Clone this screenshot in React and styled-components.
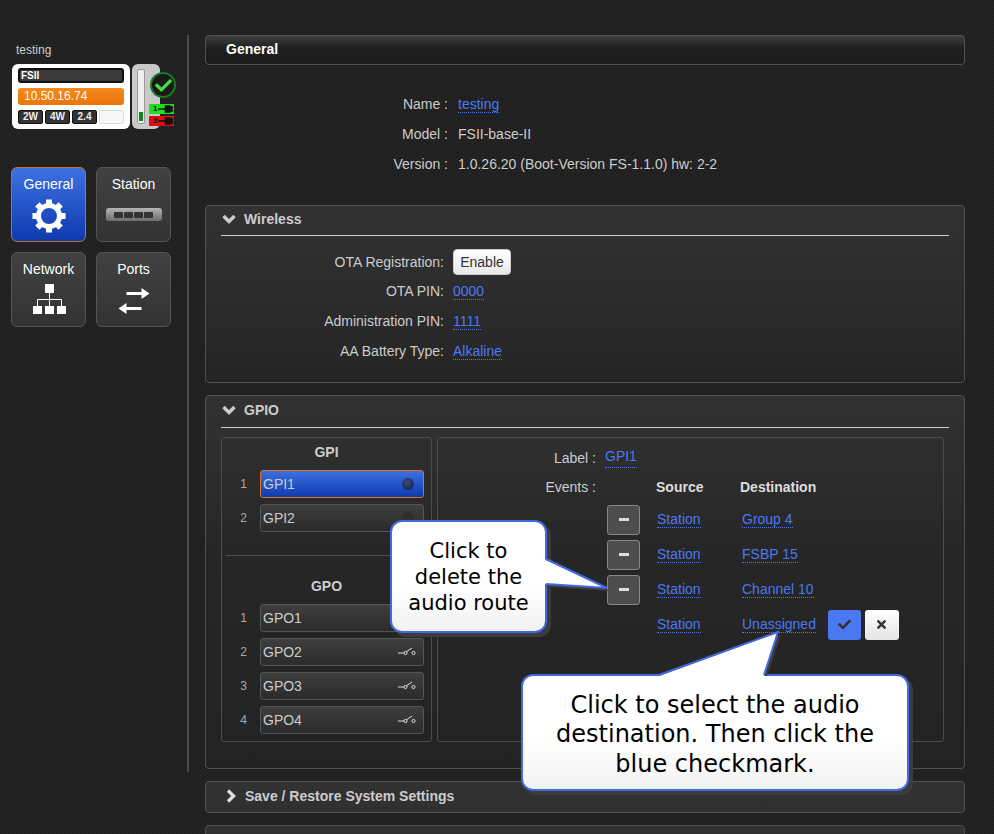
import React from 'react';
import styled, { createGlobalStyle } from 'styled-components';
import { FaCheck, FaTimes } from 'react-icons/fa';

const GlobalStyle = createGlobalStyle`
  html, body {
    margin: 0;
    height: 100%;
    overflow: hidden;
    background-color: #222;
    background-image: repeating-conic-gradient(#242424 0 25%, #1f1f1f 0 50%);
    background-size: 4px 4px;
    font-family: "Liberation Sans", Arial, sans-serif;
    font-size: 14px;
    color: #ccc;
  }
`;

const Page = styled.div`
  position: relative;
  display: flex;
  width: 994px;
  height: 834px;
  padding-top: 35px;
  box-sizing: border-box;
  overflow: hidden;
`;

const Sidebar = styled.div`
  width: 189px;
  height: 737px;
  flex-shrink: 0;
  box-sizing: border-box;
  border-right: 2px solid #4a4a4a;
`;

const DeviceName = styled.div`
  font-size: 12px;
  line-height: 14px;
  margin: 8px 0 7px 16px;
  color: #ccc;
`;

const Device = styled.div`
  position: relative;
  display: flex;
  gap: 2px;
  margin-left: 12px;
  height: 65px;
`;

const DeviceFace = styled.div`
  width: 118px;
  box-sizing: border-box;
  padding: 4px 6px;
  background: #fff;
  border-radius: 6px;
  display: flex;
  flex-direction: column;
  gap: 5px;
`;

const DeviceTitle = styled.div`
  height: 15px;
  box-sizing: border-box;
  border: 2px solid #111;
  border-radius: 3px;
  background: #3a3a3a;
  color: #fff;
  font-size: 10px;
  font-weight: bold;
  line-height: 11px;
  padding-left: 1px;
`;

const DeviceIp = styled.div`
  height: 17px;
  border-radius: 3px;
  background: linear-gradient(#f58a1f, #ec7404);
  color: #fff;
  font-size: 12px;
  line-height: 17px;
  padding-left: 6px;
`;

const DeviceChips = styled.div`
  display: flex;
  gap: 2px;
`;

const Chip = styled.div`
  width: 25px;
  height: 14px;
  box-sizing: border-box;
  border-radius: 2px;
  text-align: center;
  font-size: 10px;
  font-weight: bold;
  line-height: 12px;
  color: #eee;
  background: ${(p) => (p.$empty ? '#f7f7f7' : '#333')};
  border: 1px solid ${(p) => (p.$empty ? '#ddd' : '#111')};
`;

const DeviceSide = styled.div`
  width: 28px;
  box-sizing: border-box;
  padding: 5px 0 0 5px;
  background: #c9c9c9;
  border-radius: 6px;
`;

const LevelBar = styled.div`
  display: flex;
  align-items: flex-end;
  width: 8px;
  height: 55px;
  box-sizing: border-box;
  border: 1px solid #999;
  border-radius: 2px;
  background: #eee;
  padding: 1px 1px 2px;
`;

const LevelFill = styled.div`
  width: 100%;
  height: 9px;
  background: #0a8a1a;
`;

const StatusBadge = styled.div`
  position: absolute;
  left: 138px;
  top: 8px;
  width: 26px;
  height: 26px;
  box-sizing: border-box;
  border-radius: 50%;
  border: 2px solid #1c7a20;
  background: #1a1a1a;
  display: flex;
  align-items: center;
  justify-content: center;
`;

const Plug = styled.div`
  position: absolute;
  left: 137px;
  top: ${(p) => p.$top}px;
  width: 25px;
  height: 10px;
  border-radius: 1px;
  background: ${(p) => p.$color};
  color: #111;
  font-size: 8px;
  font-weight: bold;
  line-height: 10px;
  display: flex;
  align-items: center;
  padding-left: 4px;
  box-sizing: border-box;
`;

const NavGrid = styled.div`
  display: grid;
  grid-template-columns: 75px 75px;
  gap: 10px;
  margin: 38px 0 0 11px;
`;

const NavTile = styled.div`
  height: 75px;
  box-sizing: border-box;
  padding-top: 8px;
  border-radius: 6px;
  border: 1px solid ${(p) => (p.$active ? '#c4702a' : '#555')};
  background: ${(p) => (p.$active ? 'linear-gradient(#3d70e2, #0e3aae)' : 'linear-gradient(#414141, #333)')};
  color: #fff;
  text-align: center;
  line-height: 16px;
  display: flex;
  flex-direction: column;
  align-items: center;
  gap: 7px;
`;

const NavIcon = styled.div`
  height: 34px;
  display: flex;
  align-items: center;
  justify-content: center;
  color: #fff;
`;

const StationBar = styled.div`
  width: 56px;
  height: 13px;
  margin-bottom: 3px;
  border-radius: 3px;
  background: linear-gradient(#b5b5b5, #6c6c6c);
  display: flex;
  justify-content: center;
  align-items: center;
  gap: 1px;
`;

const StationSlot = styled.div`
  width: 9px;
  height: 6px;
  border-radius: 1px;
  background: #333;
`;

const Main = styled.div`
  width: 760px;
  margin-left: 16px;
  flex-shrink: 0;
`;

const TopBar = styled.div`
  height: 30px;
  box-sizing: border-box;
  border: 1px solid #505050;
  border-radius: 4px;
  background: linear-gradient(#3e3e3e, #1e1e1e 45%, #1d1d1d);
  padding-left: 20px;
  font-weight: bold;
  font-size: 14px;
  line-height: 26px;
  color: #fff;
`;

const InfoList = styled.div`
  margin: 24px 0 26px;
`;

const FieldRow = styled.div`
  display: grid;
  grid-template-columns: ${(p) => p.$label}px auto;
  column-gap: ${(p) => p.$gap}px;
  height: ${(p) => p.$height || 30}px;
  align-items: center;
`;

const FieldLabel = styled.div`
  text-align: right;
  color: #ccc;
`;

const FieldValue = styled.div`
  color: #ccc;
  display: flex;
`;

const Link = styled.a`
  color: #4a78f5;
  border-bottom: 1px dotted #4a78f5;
  line-height: 16px;
`;

const EnableButton = styled.button`
  width: 58px;
  height: 26px;
  padding: 0;
  border: 1px solid #ccc;
  border-radius: 4px;
  background: linear-gradient(#fff, #e8e8e8);
  color: #333;
  font-family: inherit;
  font-size: 14px;
`;

const Panel = styled.div`
  box-sizing: border-box;
  border: 1px solid #505050;
  border-radius: 4px;
  background: linear-gradient(#323232, #262626 160px, #232323);
  margin-bottom: 12px;
  padding: 0 15px;
  height: ${(p) => p.$height}px;
`;

const PanelHead = styled.div`
  height: ${(p) => p.$height || 30}px;
  box-sizing: border-box;
  display: flex;
  align-items: center;
  gap: ${(p) => p.$gap || 8}px;
  padding-left: ${(p) => p.$indent || 1}px;
  padding-bottom: ${(p) => p.$lift || 0}px;
  font-weight: bold;
  color: #ccc;
  border-bottom: ${(p) => (p.$rule ? '1px solid #ccc' : 'none')};
`;

const WirelessBody = styled.div`
  padding-top: 11px;
`;

const GpioBody = styled.div`
  display: flex;
  gap: 5px;
  margin-top: 9px;
  height: 305px;
`;

const SubPanel = styled.div`
  box-sizing: border-box;
  border: 1px solid #4c4c4c;
  border-radius: 3px;
  width: ${(p) => p.$width}px;
`;

const GroupTitle = styled.div`
  text-align: center;
  font-weight: bold;
  line-height: 20px;
  padding: ${(p) => p.$pad};
  color: #ccc;
`;

const PortRow = styled.div`
  display: flex;
  align-items: center;
  height: 28px;
  margin: 0 7px 6px 0;
`;

const PortNumber = styled.div`
  width: 38px;
  padding-right: 13px;
  box-sizing: border-box;
  text-align: right;
  font-size: 12px;
  color: #aaa;
`;

const PortButton = styled.div`
  flex: 1;
  height: 28px;
  box-sizing: border-box;
  padding: 0 6px 0 2px;
  display: flex;
  align-items: center;
  justify-content: space-between;
  border-radius: 3px;
  border: 1px solid ${(p) => (p.$active ? '#d9731c' : '#555')};
  background: ${(p) => (p.$active ? 'linear-gradient(#3d70e2, #0e3aae)' : 'linear-gradient(#3e3e3e, #2b2b2b)')};
  color: #ccc;
`;

const Led = styled.div`
  width: 12px;
  height: 12px;
  border-radius: 50%;
  margin-right: 3px;
  background: ${(p) => (p.$active ? 'radial-gradient(circle at 40% 35%, #3b4a86, #14193a)' : '#332c2c')};
`;

const Divider = styled.div`
  height: 1px;
  margin: 23px 4px 0;
  background: #4c4c4c;
`;

const LabelRow = styled.div`
  display: grid;
  grid-template-columns: 158px auto;
  column-gap: 9px;
  height: 20px;
  line-height: 20px;
  margin-top: 10px;
`;

const EventGrid = styled.div`
  display: grid;
  grid-template-columns: 169px 50px 85px auto;
  grid-template-rows: 30px;
  grid-auto-rows: 35px;
  align-items: center;
  margin-top: 4px;
`;

const EventsLabel = styled.div`
  padding-right: 11px;
  text-align: right;
`;

const ColHead = styled.div`
  font-weight: bold;
  color: #ddd;
  margin-left: ${(p) => p.$shift || 0}px;
`;

const Blank = styled.div``;

const MinusButton = styled.div`
  width: 33px;
  height: 30px;
  box-sizing: border-box;
  border: 1px solid #888;
  border-radius: 3px;
  background: #4d4d4d;
  display: flex;
  align-items: center;
  justify-content: center;
`;

const MinusBar = styled.div`
  width: 10px;
  height: 3px;
  background: #ddd;
`;

const Cell = styled.div`
  display: flex;
  align-items: center;
`;

const EditButton = styled.div`
  width: ${(p) => p.$width}px;
  height: 30px;
  margin-left: ${(p) => p.$left}px;
  box-sizing: border-box;
  border-radius: 3px;
  display: flex;
  align-items: center;
  justify-content: center;
  color: #333;
  background: ${(p) => (p.$primary ? '#4a78f0' : 'linear-gradient(#fff, #e4e4e4)')};
`;

const Callout = styled.div`
  position: absolute;
  left: ${(p) => p.$left}px;
  top: ${(p) => p.$top}px;
  width: ${(p) => p.$width}px;
  height: ${(p) => p.$height}px;
  box-sizing: border-box;
  padding-top: ${(p) => p.$nudge || 0}px;
  border: 2px solid #4169e1;
  border-radius: 12px;
  background: linear-gradient(#fff 55%, #f2f2f2);
  box-shadow: 4px 4px 0 #3c3c3c;
  color: #000;
  font-family: "DejaVu Sans", Verdana, sans-serif;
  font-size: ${(p) => p.$size}px;
  line-height: ${(p) => p.$line}px;
  text-align: center;
  display: flex;
  align-items: center;
  justify-content: center;
`;

const Tail = styled.svg`
  position: absolute;
  left: ${(p) => p.$left}px;
  top: ${(p) => p.$top}px;
  overflow: visible;
`;

const GearIcon = () => (
  <svg width="34" height="34" viewBox="0 0 34 34" fill="#fff">
    <circle cx="17" cy="17" r="10.5" fill="none" stroke="#fff" strokeWidth="5" />
    {[0, 45, 90, 135, 180, 225, 270, 315].map((deg) => (
      <rect key={deg} x="14" y="0.5" width="6" height="6" transform={`rotate(${deg} 17 17)`} />
    ))}
  </svg>
);

const SitemapIcon = () => (
  <svg width="34" height="34" viewBox="0 0 34 34" fill="#fff">
    <rect x="13" y="0" width="9" height="9" />
    <rect x="1" y="22" width="9" height="8" />
    <rect x="13" y="22" width="9" height="8" />
    <rect x="25" y="22" width="9" height="8" />
    <path d="M17.5 9v13M5.5 22v-6.5h24V22" fill="none" stroke="#fff" strokeWidth="1" />
  </svg>
);

const ArrowsIcon = () => (
  <svg width="34" height="34" viewBox="0 0 34 34" fill="#fff">
    <path d="M9.5 8h15V4l8 5.5-8 5.5v-4h-15z" />
    <path d="M24.5 23h-15v-4l-8 5.5 8 5.5v-4h15z" />
  </svg>
);

const ChevronDown = () => (
  <svg width="14" height="10" viewBox="0 0 14 10" fill="none" stroke="#ccc" strokeWidth="3.4">
    <path d="M1.5 2l5.5 5.5L12.5 2" />
  </svg>
);

const ChevronRight = () => (
  <svg width="10" height="14" viewBox="0 0 10 14" fill="none" stroke="#ddd" strokeWidth="3.4">
    <path d="M2 1.5L7.5 7 2 12.5" />
  </svg>
);

const PlugIcon = () => (
  <svg width="18" height="10" viewBox="0 0 18 10">
    <path d="M1 5h8M9 1.5h4a3.5 3.5 0 0 1 0 7H9zM13 3h5M13 7h5" stroke="#111" strokeWidth="1.4" fill="#111" />
  </svg>
);

const SwitchIcon = () => (
  <svg width="20" height="10" viewBox="0 0 20 10" fill="none" stroke="#ddd" strokeWidth="1">
    <path d="M1 6h6" />
    <circle cx="8.5" cy="6" r="1.6" />
    <path d="M9 5l6-4" />
    <circle cx="16.5" cy="6" r="1.6" />
  </svg>
);

const eventRows = [
  ['Station', 'Group 4', true],
  ['Station', 'FSBP 15', true],
  ['Station', 'Channel 10', true],
  ['Station', 'Unassigned', false],
];

export default function App() {
  return (
    <Page>
      <GlobalStyle />
      <Sidebar>
        <DeviceName>testing</DeviceName>
        <Device>
          <DeviceFace>
            <DeviceTitle>FSII</DeviceTitle>
            <DeviceIp>10.50.16.74</DeviceIp>
            <DeviceChips>
              <Chip>2W</Chip>
              <Chip>4W</Chip>
              <Chip>2.4</Chip>
              <Chip $empty />
            </DeviceChips>
          </DeviceFace>
          <DeviceSide>
            <LevelBar>
              <LevelFill />
            </LevelBar>
          </DeviceSide>
          <StatusBadge>
            <FaCheck size={17} color="#3fe03f" />
          </StatusBadge>
          <Plug $top={40} $color="#1fe01f">
            1
            <PlugIcon />
          </Plug>
          <Plug $top={52} $color="#e00d0d">
            2
            <PlugIcon />
          </Plug>
        </Device>
        <NavGrid>
          <NavTile $active>
            General
            <NavIcon>
              <GearIcon />
            </NavIcon>
          </NavTile>
          <NavTile>
            Station
            <NavIcon>
              <StationBar>
                <StationSlot />
                <StationSlot />
                <StationSlot />
                <StationSlot />
              </StationBar>
            </NavIcon>
          </NavTile>
          <NavTile>
            Network
            <NavIcon>
              <SitemapIcon />
            </NavIcon>
          </NavTile>
          <NavTile>
            Ports
            <NavIcon>
              <ArrowsIcon />
            </NavIcon>
          </NavTile>
        </NavGrid>
      </Sidebar>
      <Main>
        <TopBar>General</TopBar>
        <InfoList>
          <FieldRow $label={243} $gap={10}>
            <FieldLabel>Name :</FieldLabel>
            <FieldValue>
              <Link>testing</Link>
            </FieldValue>
          </FieldRow>
          <FieldRow $label={243} $gap={10}>
            <FieldLabel>Model :</FieldLabel>
            <FieldValue>FSII-base-II</FieldValue>
          </FieldRow>
          <FieldRow $label={243} $gap={10}>
            <FieldLabel>Version :</FieldLabel>
            <FieldValue>1.0.26.20 (Boot-Version FS-1.1.0) hw: 2-2</FieldValue>
          </FieldRow>
        </InfoList>

        <Panel $height={178}>
          <PanelHead $rule $lift={4}>
            <ChevronDown />
            Wireless
          </PanelHead>
          <WirelessBody>
            <FieldRow $label={223} $gap={9} $height={29}>
              <FieldLabel>OTA Registration:</FieldLabel>
              <FieldValue>
                <EnableButton>Enable</EnableButton>
              </FieldValue>
            </FieldRow>
            <FieldRow $label={223} $gap={9}>
              <FieldLabel>OTA PIN:</FieldLabel>
              <FieldValue>
                <Link>0000</Link>
              </FieldValue>
            </FieldRow>
            <FieldRow $label={223} $gap={9}>
              <FieldLabel>Administration PIN:</FieldLabel>
              <FieldValue>
                <Link>1111</Link>
              </FieldValue>
            </FieldRow>
            <FieldRow $label={223} $gap={9}>
              <FieldLabel>AA Battery Type:</FieldLabel>
              <FieldValue>
                <Link>Alkaline</Link>
              </FieldValue>
            </FieldRow>
          </WirelessBody>
        </Panel>

        <Panel $height={374}>
          <PanelHead $rule $height={32} $lift={4}>
            <ChevronDown />
            GPIO
          </PanelHead>
          <GpioBody>
            <SubPanel $width={211}>
              <GroupTitle $pad="4px 0 8px">GPI</GroupTitle>
              <PortRow>
                <PortNumber>1</PortNumber>
                <PortButton $active>
                  GPI1
                  <Led $active />
                </PortButton>
              </PortRow>
              <PortRow>
                <PortNumber>2</PortNumber>
                <PortButton>
                  GPI2
                  <Led />
                </PortButton>
              </PortRow>
              <Divider />
              <GroupTitle $pad="20px 0 8px">GPO</GroupTitle>
              {['GPO1', 'GPO2', 'GPO3', 'GPO4'].map((name, i) => (
                <PortRow key={name}>
                  <PortNumber>{i + 1}</PortNumber>
                  <PortButton>
                    {name}
                    <SwitchIcon />
                  </PortButton>
                </PortRow>
              ))}
            </SubPanel>
            <SubPanel $width={507}>
              <LabelRow>
                <FieldLabel>Label :</FieldLabel>
                <FieldValue>
                  <Link>GPI1</Link>
                </FieldValue>
              </LabelRow>
              <EventGrid>
                <EventsLabel>Events :</EventsLabel>
                <Blank />
                <ColHead $shift={-1}>Source</ColHead>
                <ColHead $shift={-2}>Destination</ColHead>
                {eventRows.map(([source, dest, removable]) => (
                  <React.Fragment key={dest}>
                    <Blank />
                    <Cell>
                      {removable && (
                        <MinusButton>
                          <MinusBar />
                        </MinusButton>
                      )}
                    </Cell>
                    <Cell>
                      <Link>{source}</Link>
                    </Cell>
                    <Cell>
                      <Link>{dest}</Link>
                      {!removable && (
                        <>
                          <EditButton $primary $width={33} $left={12}>
                            <FaCheck size={13} />
                          </EditButton>
                          <EditButton $width={34} $left={4}>
                            <FaTimes size={13} />
                          </EditButton>
                        </>
                      )}
                    </Cell>
                  </React.Fragment>
                ))}
              </EventGrid>
            </SubPanel>
          </GpioBody>
        </Panel>

        <Panel $height={32}>
          <PanelHead $indent={5} $gap={9} $lift={2}>
            <ChevronRight />
            Save / Restore System Settings
          </PanelHead>
        </Panel>

        <Panel $height={40}>
          <PanelHead $indent={5} $gap={9}>
            <ChevronRight />
          </PanelHead>
        </Panel>
      </Main>

      <Callout $left={390} $top={520} $width={157} $height={113} $size={21} $line={26}>
        Click to
        <br />
        delete the
        <br />
        audio route
        <Tail $left={152} $top={34} width="66" height="32">
          <polygon points="3,7 66,35 3,31" fill="#3c3c3c" />
          <polygon points="0,3 63,32 0,28" fill="#fff" />
          <polyline points="2,3 63,32 2,28" fill="none" stroke="#4169e1" strokeWidth="2" />
        </Tail>
      </Callout>
      <Callout $left={521} $top={674} $width={388} $height={117} $size={24} $line={29.5} $nudge={5}>
        Click to select the audio
        <br />
        destination. Then click the
        <br />
        blue checkmark.
        <Tail $left={130} $top={-46} width="112" height="48">
          <polygon points="114,46 128,5 9,46" fill="#3c3c3c" />
          <polygon points="6,46 125,2 111,47 6,47" fill="#fff" />
          <polyline points="6,45 125,2 111,45" fill="none" stroke="#4169e1" strokeWidth="2" />
        </Tail>
      </Callout>
    </Page>
  );
}
